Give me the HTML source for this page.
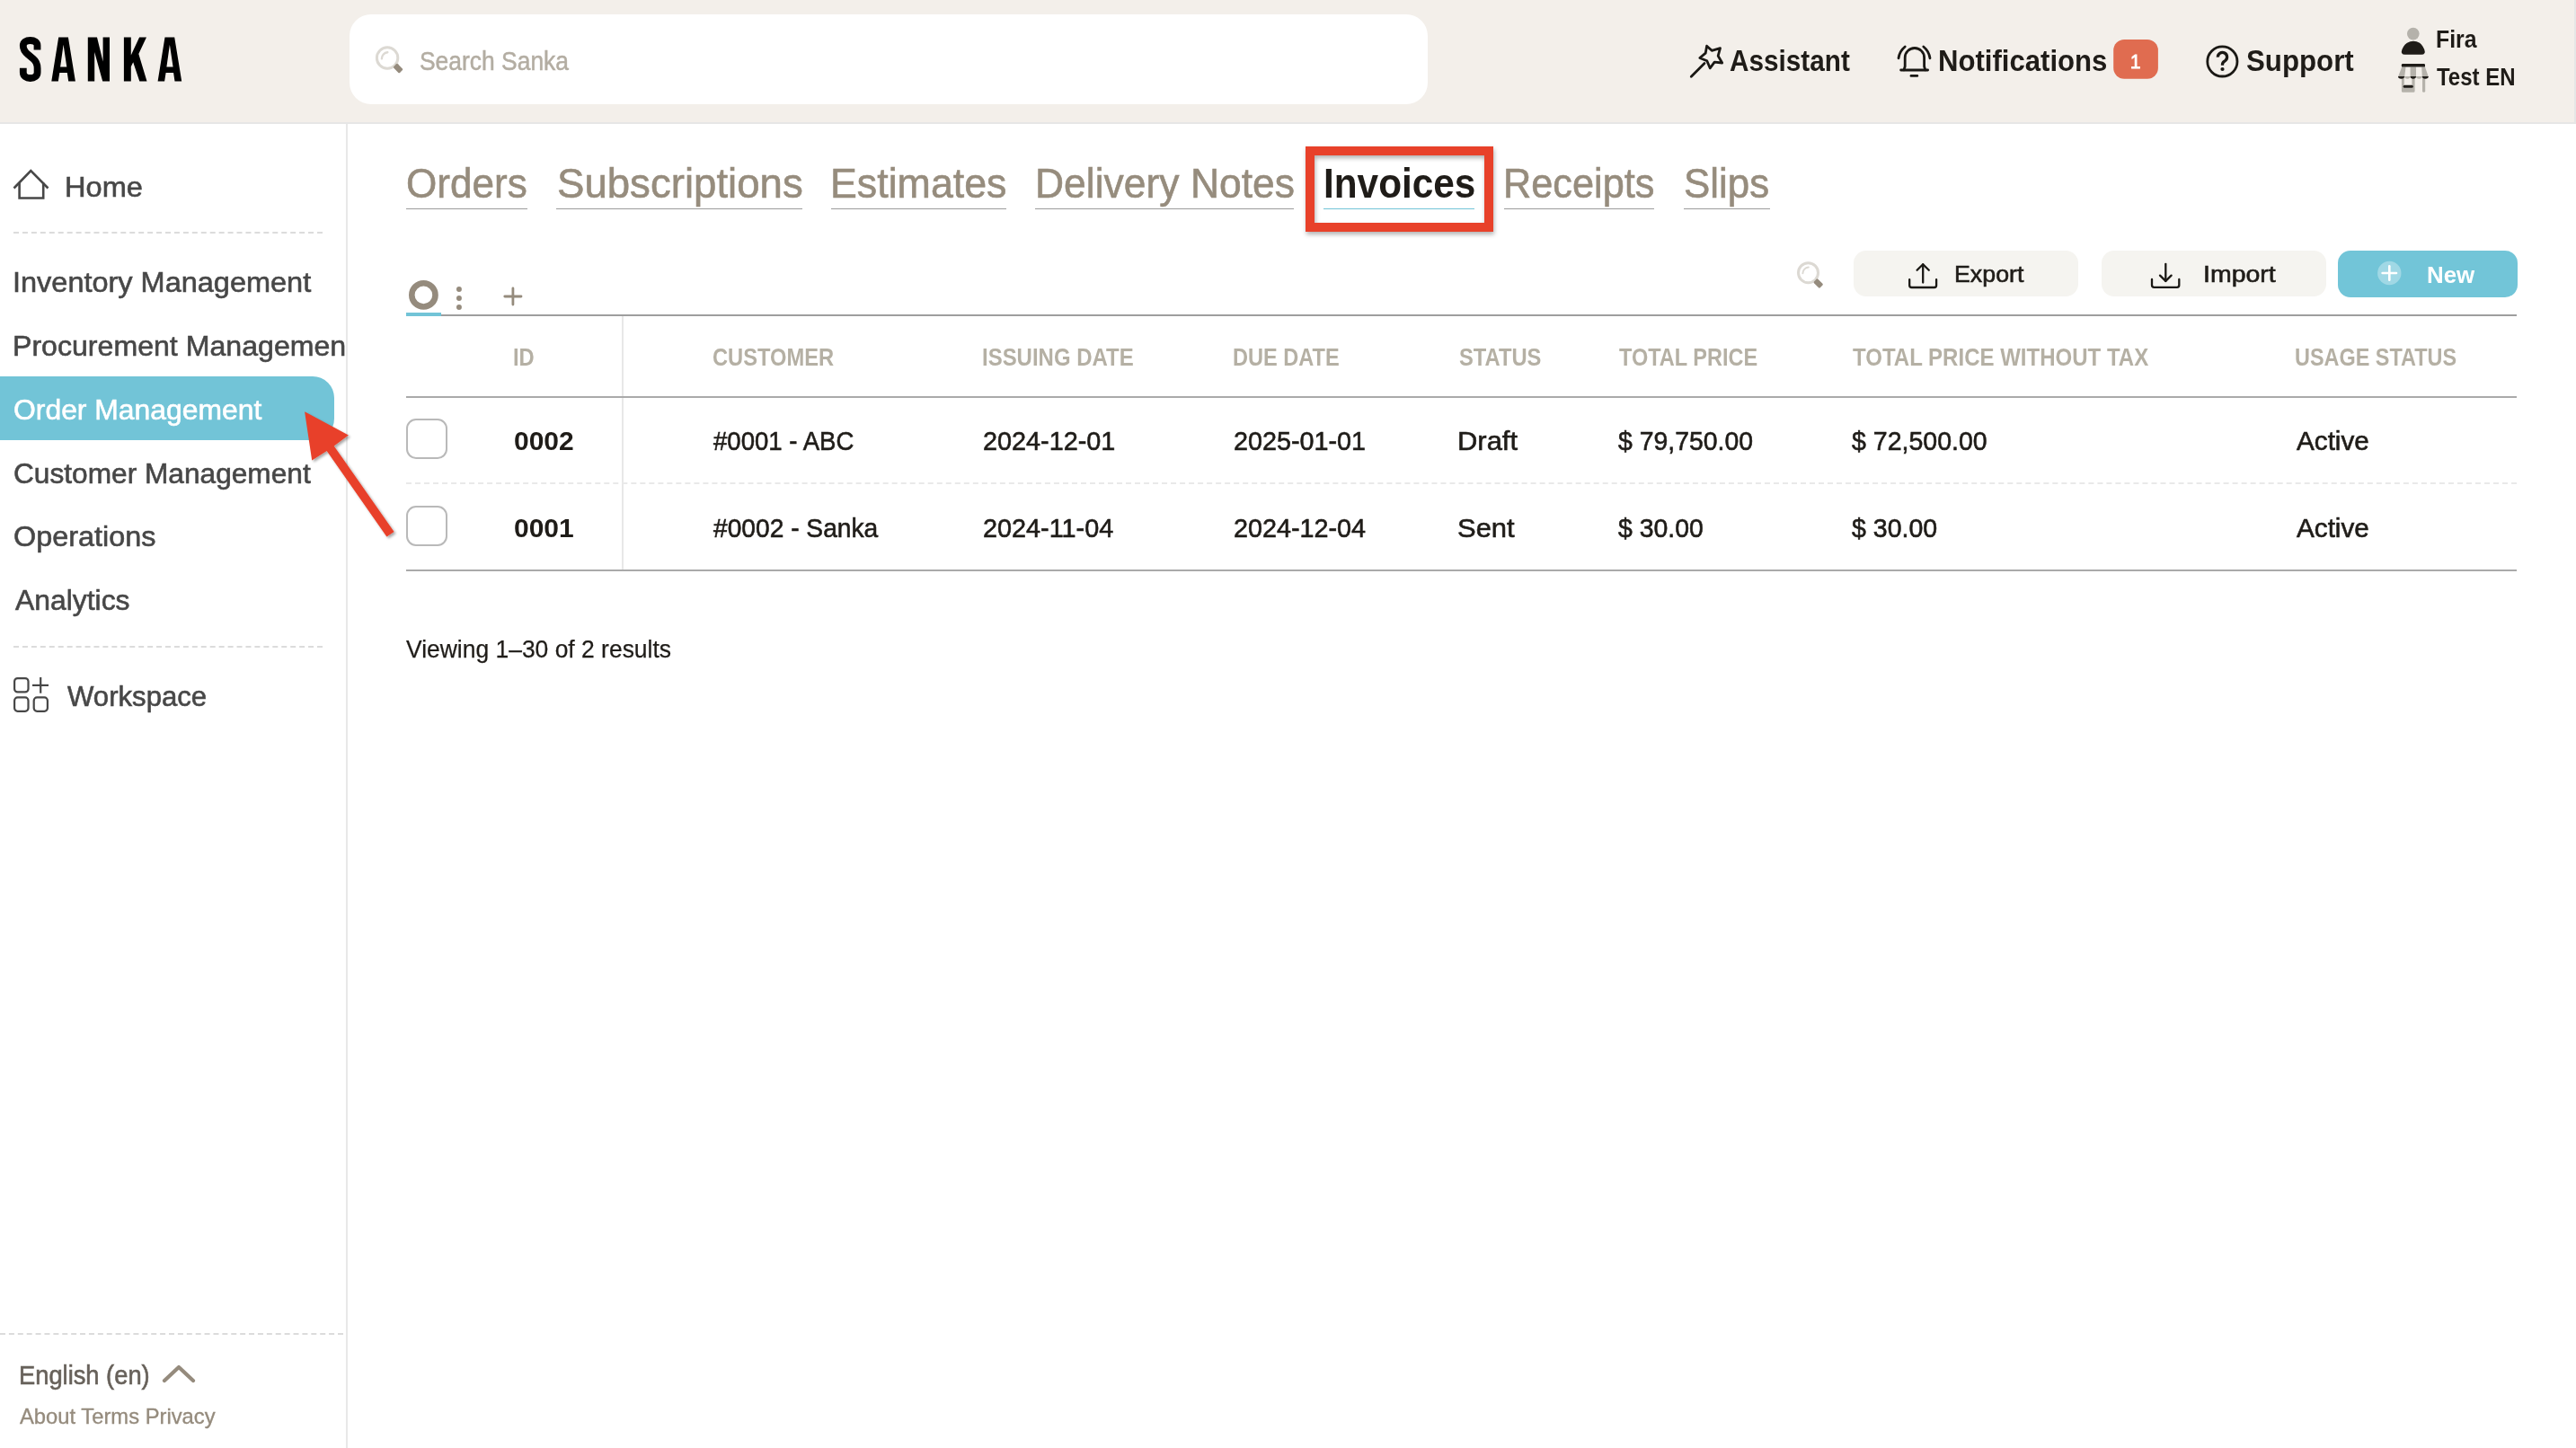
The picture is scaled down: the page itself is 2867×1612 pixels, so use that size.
<!DOCTYPE html>
<html><head><meta charset="utf-8"><style>
html,body{margin:0;padding:0;background:#fff;width:2867px;height:1612px;overflow:hidden;position:relative}
.t{position:absolute;font-family:"Liberation Sans", sans-serif;line-height:1;white-space:nowrap;transform-origin:0 0}
</style></head><body>
<div style="position:absolute;left:0px;top:0px;width:2867px;height:136px;background:#f3efea"></div>
<div style="position:absolute;left:0px;top:136px;width:2867px;height:2px;background:#e6e6e6"></div>
<div style="position:absolute;left:2865px;top:0px;width:2px;height:138px;background:#e6e6e6"></div>
<svg style="position:absolute;left:0;top:0" width="240" height="136" viewBox="0 0 240 136">
<path fill="none" stroke="#000" stroke-width="7.8" stroke-linejoin="miter" d="M41.5 55.5 V50.5 C41.5 47 38.5 45 33.7 45 C29 45 25.8 47 25.8 51 C25.8 55 27.5 57.5 31 60.5 L37 65.5 C40 68 41.6 71 41.6 76 V80.5 C41.6 84.5 38.5 87 33.7 87 C29 87 25.8 84.5 25.8 80.5 V75.8"/>
<path fill="#000" fill-rule="evenodd" d="M57.3 90.5 L65.2 41.6 L75.9 41.6 L83.9 90.5 L76.2 90.5 L74.8 81 L66.3 81 L64.8 90.5 Z M67.1 74.5 L70.6 49.8 L74.3 74.5 Z"/>
<polygon fill="#000" points="97.8,90.5 97.8,41.6 108,41.6 114.6,68.5 114.6,41.6 122,41.6 122,90.5 114.2,90.5 105.2,58 105.2,90.5"/>
<polygon fill="#000" points="137.9,41.6 145.8,41.6 145.8,61.5 155.1,41.6 163,41.6 154.3,60 163.5,90.5 155.3,90.5 148.2,69.2 145.8,74.2 145.8,90.5 137.9,90.5"/>
<path fill="#000" fill-rule="evenodd" d="M175.6 90.5 L183.5 41.6 L194.2 41.6 L202.2 90.5 L194.5 90.5 L193.1 81 L184.6 81 L183.1 90.5 Z M185.4 74.5 L188.9 49.8 L192.6 74.5 Z"/>
</svg>
<div style="position:absolute;left:389px;top:16px;width:1200px;height:100px;background:#fff;border-radius:24px"></div>
<svg style="position:absolute;left:400px;top:40px" width="60" height="50" viewBox="400 40 60 50">
<circle cx="431.1" cy="64.5" r="11.7" fill="none" stroke="#dcd9d3" stroke-width="3"/>
<path d="M424.9 65.3 A7.2 7.2 0 0 1 431.3 58.2" fill="none" stroke="#dcd9d3" stroke-width="2.4" stroke-linecap="round"/>
<rect x="438.3" y="72.9" width="9.6" height="6.4" rx="1.2" fill="#958b7d" transform="rotate(45 443.1 76.1)"/>
</svg>
<div class="t" style="left:466.9px;top:52.7px;font-size:29.36px;font-weight:400;transform:scaleX(0.9);color:#b3ada2;-webkit-text-stroke:0.5px currentColor;">Search Sanka</div>
<svg style="position:absolute;left:1870px;top:20px" width="960" height="100" viewBox="1870 20 960 100">
<g fill="none" stroke="#1a1814" stroke-width="2.8" stroke-linecap="round" stroke-linejoin="round">
<line x1="1882.3" y1="85.2" x2="1897" y2="70.6"/>
<polygon points="1899.6,51.2 1905.2,56.3 1914.5,53.6 1912.2,62.2 1916.7,70 1908.2,69.2 1903.2,75.8 1899.8,67.8 1891.8,64.5 1898.2,59.2"/>
<path d="M2119 77.8 L2120.2 74 V64.2 A10.7 10.7 0 0 1 2141.6 64.2 V74 L2142.8 77.8"/>
<line x1="2115.6" y1="78" x2="2145.6" y2="78"/>
<line x1="2127" y1="84.4" x2="2133.8" y2="84.4"/>
<path d="M2113 64.8 A20 20 0 0 1 2120.2 52"/>
<path d="M2148 64.8 A20 20 0 0 0 2140.8 52"/>
<circle cx="2473.4" cy="68.4" r="16.6"/>
<path d="M2468.4 63.6 A5.1 5.1 0 1 1 2476.2 67.8 C2474.5 68.8 2473.5 69.8 2473.5 71.6 V72.8" stroke-width="3.3" stroke-linecap="butt"/>
</g>
<circle cx="2473.5" cy="77" r="2.1" fill="#1a1814"/>
<rect x="2352.2" y="44" width="49.7" height="43.8" rx="12" fill="#e06c50"/>
<circle cx="2685.8" cy="37.6" r="6.8" fill="#b5b2ab"/>
<path d="M2679 47.8 Q2686 43.6 2693 47.8 Q2695 49.2 2696.5 51.8 L2698.2 55 Q2700.2 60.8 2695 60.8 H2676.6 Q2671.4 60.8 2673.4 55 L2675.1 51.8 Q2676.6 49.2 2679 47.8 Z" fill="#1f1c18"/>
<g fill="#b5b2ab">
<polygon points="2673.2,74.5 2677.6,74.5 2676.1,85.5 2669,85.5"/>
<rect x="2682.6" y="74.5" width="6.4" height="11"/>
<polygon points="2695.2,74.5 2699,74.5 2702.8,85.5 2695.8,85.5"/>
<path d="M2676.1 85 h6.5 a3.25 2.8 0 0 1 -6.5 0 Z M2689 85 h6.8 a3.4 2.8 0 0 1 -6.8 0 Z"/>
<path d="M2672.9 87 H2675.8 V97 H2684.4 V87 H2687.6 V101.3 Q2687.6 102.8 2686.1 102.8 H2674.4 Q2672.9 102.8 2672.9 101.3 Z"/>
<rect x="2696" y="86" width="3.2" height="16.8" rx="1.6"/>
</g>
<g fill="#1f1c18">
<rect x="2672.9" y="71.1" width="26.1" height="3.5" rx="1.2"/>
<path d="M2669 85 h7.1 a3.55 2.8 0 0 1 -7.1 0 Z M2682.6 85 h6.4 a3.2 2.8 0 0 1 -6.4 0 Z M2695.8 85 h7 a3.5 2.8 0 0 1 -7 0 Z"/>
<rect x="2674.7" y="94.8" width="11.1" height="3" rx="1.5"/>
</g>
</svg>
<div class="t" style="left:1924.9px;top:51.9px;font-size:32.46px;font-weight:700;transform:scaleX(0.9159);color:#1f1c18;">Assistant</div>
<div class="t" style="left:2157.1px;top:52.1px;font-size:32.46px;font-weight:700;transform:scaleX(0.9585);color:#1f1c18;">Notifications</div>
<div class="t" style="left:2500.0px;top:52.0px;font-size:32.46px;font-weight:700;transform:scaleX(0.9626);color:#1f1c18;">Support</div>
<div class="t" style="left:2710.8px;top:30.9px;font-size:26.89px;font-weight:700;transform:scaleX(0.9234);color:#1f1c18;">Fira</div>
<div class="t" style="left:2712.3px;top:72.8px;font-size:26.89px;font-weight:700;transform:scaleX(0.8927);color:#1f1c18;">Test EN</div>
<div class="t" style="left:2371.1px;top:57.0px;font-size:22.67px;font-weight:700;transform:scaleX(0.9091);color:#ffffff;font-weight:400;-webkit-text-stroke:0.9px #fff;">1</div>
<div style="position:absolute;left:385px;top:138px;width:2px;height:1474px;background:#e8e8e8"></div>
<svg style="position:absolute;left:0;top:170px" width="380" height="640" viewBox="0 170 380 640">
<g fill="none" stroke="#474747" stroke-width="2.6">
<path d="M15.5 209.5 L34.3 190 L53.5 209.5" stroke-linecap="butt"/>
<path d="M21.6 203.5 V220.5 H48.2 V203.5"/>
</g>
<g fill="none" stroke="#474747" stroke-width="2.2">
<rect x="16.1" y="755.1" width="15.4" height="15.3" rx="3.5"/>
<rect x="16.1" y="776.4" width="15.4" height="15.4" rx="3.5"/>
<rect x="37.7" y="776.4" width="15.2" height="15.4" rx="3.5"/>
<line x1="45.2" y1="754" x2="45.2" y2="771.7"/>
<line x1="36" y1="762.9" x2="54" y2="762.9"/>
</g>
</svg>
<div style="position:absolute;left:15px;top:258px;width:344px;height:2px;border-top:2px dashed #dcdcdc;box-sizing:border-box"></div>
<div style="position:absolute;left:15px;top:719px;width:344px;height:2px;border-top:2px dashed #dcdcdc;box-sizing:border-box"></div>
<div style="position:absolute;left:0px;top:1484px;width:382px;height:2px;border-top:2px dashed #dcdcdc;box-sizing:border-box"></div>
<div style="position:absolute;left:0px;top:419px;width:372px;height:71px;background:#72c4d7;border-radius:0 24px 24px 0"></div>
<div style="position:absolute;left:0;top:0;width:385px;height:1612px;overflow:hidden">
<div class="t" style="left:72.4px;top:192.4px;font-size:31.99px;font-weight:400;transform:scaleX(1.0185);color:#474747;-webkit-text-stroke:0.6px currentColor;">Home</div>
<div class="t" style="left:14.0px;top:297.8px;font-size:31.99px;font-weight:400;transform:scaleX(1.0154);color:#474747;-webkit-text-stroke:0.6px currentColor;">Inventory Management</div>
<div class="t" style="left:14.0px;top:369.0px;font-size:31.99px;font-weight:400;transform:scaleX(1.0038);color:#474747;-webkit-text-stroke:0.6px currentColor;">Procurement Management</div>
<div class="t" style="left:14.6px;top:439.7px;font-size:31.99px;font-weight:400;transform:scaleX(0.9964);color:#ffffff;-webkit-text-stroke:0.6px currentColor;">Order Management</div>
<div class="t" style="left:15.0px;top:510.7px;font-size:31.99px;font-weight:400;transform:scaleX(0.9895);color:#474747;-webkit-text-stroke:0.6px currentColor;">Customer Management</div>
<div class="t" style="left:15.0px;top:581.0px;font-size:31.99px;font-weight:400;transform:scaleX(1.0131);color:#474747;-webkit-text-stroke:0.6px currentColor;">Operations</div>
<div class="t" style="left:17.0px;top:651.6px;font-size:31.99px;font-weight:400;transform:scaleX(0.9961);color:#474747;-webkit-text-stroke:0.6px currentColor;">Analytics</div>
<div class="t" style="left:74.5px;top:758.9px;font-size:31.99px;font-weight:400;transform:scaleX(0.9734);color:#474747;-webkit-text-stroke:0.6px currentColor;">Workspace</div>
</div>
<div class="t" style="left:21.0px;top:1517.3px;font-size:28.63px;font-weight:400;transform:scaleX(0.9537);color:#66615a;-webkit-text-stroke:0.6px currentColor;color:#67615a;">English (en)</div>
<div class="t" style="left:21.8px;top:1565.0px;font-size:24.71px;font-weight:400;transform:scaleX(0.9624);color:#958b7d;-webkit-text-stroke:0.35px currentColor;">About Terms Privacy</div>
<svg style="position:absolute;left:170px;top:1510px" width="60" height="40" viewBox="170 1510 60 40">
<path d="M183 1537 L199 1522 L215 1537" fill="none" stroke="#958b7d" stroke-width="4.2" stroke-linecap="round" stroke-linejoin="round"/>
</svg>
<div style="position:absolute;left:452px;top:232px;width:135px;height:1.3000000000000114px;background:#9c9c9c"></div>
<div style="position:absolute;left:619px;top:232px;width:274px;height:1.3000000000000114px;background:#9c9c9c"></div>
<div style="position:absolute;left:925px;top:232px;width:195px;height:1.3000000000000114px;background:#9c9c9c"></div>
<div style="position:absolute;left:1152px;top:232px;width:288px;height:1.3000000000000114px;background:#9c9c9c"></div>
<div style="position:absolute;left:1674px;top:232px;width:167px;height:1.3000000000000114px;background:#9c9c9c"></div>
<div style="position:absolute;left:1874px;top:232px;width:96px;height:1.3000000000000114px;background:#9c9c9c"></div>
<div style="position:absolute;left:1473px;top:232px;width:168px;height:1.3000000000000114px;background:#72c4d7"></div>
<div class="t" style="left:451.6px;top:181.2px;font-size:46.24px;font-weight:400;transform:scaleX(0.9543);color:#968c7d;-webkit-text-stroke:0.6px currentColor;">Orders</div>
<div class="t" style="left:619.5px;top:181.2px;font-size:46.24px;font-weight:400;transform:scaleX(0.9861);color:#968c7d;-webkit-text-stroke:0.6px currentColor;">Subscriptions</div>
<div class="t" style="left:923.9px;top:181.2px;font-size:46.24px;font-weight:400;transform:scaleX(0.968);color:#968c7d;-webkit-text-stroke:0.6px currentColor;">Estimates</div>
<div class="t" style="left:1151.6px;top:181.2px;font-size:46.24px;font-weight:400;transform:scaleX(0.9614);color:#968c7d;-webkit-text-stroke:0.6px currentColor;">Delivery Notes</div>
<div class="t" style="left:1472.5px;top:181.0px;font-size:46.24px;font-weight:700;transform:scaleX(0.9156);color:#1f1c18;">Invoices</div>
<div class="t" style="left:1673.3px;top:181.2px;font-size:46.24px;font-weight:400;transform:scaleX(0.9368);color:#968c7d;-webkit-text-stroke:0.6px currentColor;">Receipts</div>
<div class="t" style="left:1874.0px;top:181.2px;font-size:46.24px;font-weight:400;transform:scaleX(0.9495);color:#968c7d;-webkit-text-stroke:0.6px currentColor;">Slips</div>
<div style="position:absolute;left:1453px;top:163px;width:209px;height:95px;border:10px solid #e8412a;box-sizing:border-box;filter:drop-shadow(1px 3px 2.5px rgba(0,0,0,0.3))"></div>
<svg style="position:absolute;left:440px;top:300px" width="160" height="60" viewBox="440 300 160 60">
<circle cx="471.4" cy="328.4" r="13.1" fill="none" stroke="#958b7d" stroke-width="6.6"/>
<circle cx="510.9" cy="321.9" r="3" fill="#958b7d"/>
<circle cx="510.9" cy="331.9" r="3" fill="#958b7d"/>
<circle cx="510.9" cy="341.9" r="3" fill="#958b7d"/>
<g stroke="#958b7d" stroke-width="2.8" stroke-linecap="round"><line x1="561.8" y1="330" x2="580" y2="330"/><line x1="570.9" y1="320.9" x2="570.9" y2="339.1"/></g>
</svg>
<div style="position:absolute;left:452px;top:348px;width:39px;height:4px;background:#72c4d7"></div>
<div style="position:absolute;left:491px;top:350px;width:2310px;height:2px;background:#9e9e9e"></div>
<svg style="position:absolute;left:1990px;top:280px" width="50" height="50" viewBox="1990 280 50 50">
<circle cx="2012.5" cy="303.7" r="11" fill="none" stroke="#dcd9d3" stroke-width="3"/>
<path d="M2006.4 304.2 A6.8 6.8 0 0 1 2012.8 297.6" fill="none" stroke="#dcd9d3" stroke-width="2" stroke-linecap="round"/>
<rect x="2018.9" y="312.4" width="9.6" height="6.2" rx="1.2" fill="#958b7d" transform="rotate(45 2023.7 315.5)"/>
</svg>
<div style="position:absolute;left:2063px;top:279px;width:250px;height:51px;background:#f5f4f0;border-radius:14px"></div>
<div style="position:absolute;left:2339px;top:279px;width:250px;height:51px;background:#f5f4f0;border-radius:14px"></div>
<div style="position:absolute;left:2602px;top:279px;width:200px;height:52px;background:#72c5d8;border-radius:14px"></div>
<svg style="position:absolute;left:2110px;top:285px" width="700" height="45" viewBox="2110 285 700 45">
<g fill="none" stroke="#1a1814" stroke-width="2.3" stroke-linecap="round" stroke-linejoin="round">
<line x1="2140.2" y1="294.5" x2="2140.2" y2="314.5"/>
<path d="M2133.6 300.8 L2140.2 294.2 L2146.8 300.8"/>
<path d="M2125.2 311.2 V317.8 Q2125.2 320 2127.6 320 H2152.8 Q2155.1 320 2155.1 317.8 V311.2"/>
<line x1="2410.3" y1="293.8" x2="2410.3" y2="313"/>
<path d="M2404 306.6 L2410.3 312.9 L2416.6 306.6"/>
<path d="M2395 311 V317.6 Q2395 319.8 2397.4 319.8 H2423 Q2425.3 319.8 2425.3 317.6 V311"/>
</g>
<circle cx="2659.3" cy="304" r="13.2" fill="#ffffff" fill-opacity="0.33"/>
<g stroke="#fff" stroke-width="2.6" stroke-linecap="round"><line x1="2651.6" y1="304" x2="2667" y2="304"/><line x1="2659.3" y1="296.3" x2="2659.3" y2="311.7"/></g>
</svg>
<div class="t" style="left:2174.7px;top:292.2px;font-size:26.7px;font-weight:400;transform:scaleX(1.004);color:#1f1c18;-webkit-text-stroke:0.6px currentColor;">Export</div>
<div class="t" style="left:2451.9px;top:292.3px;font-size:26.7px;font-weight:400;transform:scaleX(1.0676);color:#1f1c18;-webkit-text-stroke:0.6px currentColor;">Import</div>
<div class="t" style="left:2700.5px;top:293.0px;font-size:26.7px;font-weight:700;transform:scaleX(0.9698);color:#ffffff;">New</div>
<div style="position:absolute;left:692px;top:352px;width:2px;height:283px;background:#e8e8e8"></div>
<div style="position:absolute;left:452px;top:441px;width:2349px;height:2px;background:#aaaaaa"></div>
<div style="position:absolute;left:452px;top:537px;width:2349px;height:2px;border-top:2px dashed #e9e9e9;box-sizing:border-box"></div>
<div style="position:absolute;left:452px;top:634px;width:2349px;height:2px;background:#aaaaaa"></div>
<div style="position:absolute;left:452px;top:466px;width:46px;height:45px;border:2px solid #b9b9b9;border-radius:11px;box-sizing:border-box;background:#fff"></div>
<div style="position:absolute;left:452px;top:563px;width:46px;height:45px;border:2px solid #b9b9b9;border-radius:11px;box-sizing:border-box;background:#fff"></div>
<div class="t" style="left:571.2px;top:384.3px;font-size:27.33px;font-weight:700;transform:scaleX(0.8674);color:#b5b0a4;">ID</div>
<div class="t" style="left:793.1px;top:384.3px;font-size:27.33px;font-weight:700;transform:scaleX(0.8669);color:#b5b0a4;">CUSTOMER</div>
<div class="t" style="left:1093.2px;top:384.3px;font-size:27.33px;font-weight:700;transform:scaleX(0.8767);color:#b5b0a4;">ISSUING DATE</div>
<div class="t" style="left:1371.9px;top:384.3px;font-size:27.33px;font-weight:700;transform:scaleX(0.8622);color:#b5b0a4;">DUE DATE</div>
<div class="t" style="left:1623.6px;top:384.3px;font-size:27.33px;font-weight:700;transform:scaleX(0.8689);color:#b5b0a4;">STATUS</div>
<div class="t" style="left:1801.6px;top:384.3px;font-size:27.33px;font-weight:700;transform:scaleX(0.8601);color:#b5b0a4;">TOTAL PRICE</div>
<div class="t" style="left:2061.8px;top:384.3px;font-size:27.33px;font-weight:700;transform:scaleX(0.8791);color:#b5b0a4;">TOTAL PRICE WITHOUT TAX</div>
<div class="t" style="left:2554.2px;top:384.3px;font-size:27.33px;font-weight:700;transform:scaleX(0.8575);color:#b5b0a4;">USAGE STATUS</div>
<div class="t" style="left:571.7px;top:476.1px;font-size:29.87px;font-weight:700;transform:scaleX(1.0047);color:#1f1c18;">0002</div>
<div class="t" style="left:794.0px;top:476.1px;font-size:29.87px;font-weight:400;transform:scaleX(0.9238);color:#1f1c18;-webkit-text-stroke:0.6px currentColor;">#0001 - ABC</div>
<div class="t" style="left:1094.0px;top:476.1px;font-size:29.87px;font-weight:400;transform:scaleX(0.9649);color:#1f1c18;-webkit-text-stroke:0.6px currentColor;">2024-12-01</div>
<div class="t" style="left:1372.6px;top:476.1px;font-size:29.87px;font-weight:400;transform:scaleX(0.9629);color:#1f1c18;-webkit-text-stroke:0.6px currentColor;">2025-01-01</div>
<div class="t" style="left:1622.4px;top:476.1px;font-size:29.87px;font-weight:400;transform:scaleX(1.0365);color:#1f1c18;-webkit-text-stroke:0.6px currentColor;">Draft</div>
<div class="t" style="left:1800.6px;top:476.1px;font-size:29.87px;font-weight:400;transform:scaleX(0.9513);color:#1f1c18;-webkit-text-stroke:0.6px currentColor;">$ 79,750.00</div>
<div class="t" style="left:2061.0px;top:476.1px;font-size:29.87px;font-weight:400;transform:scaleX(0.9551);color:#1f1c18;-webkit-text-stroke:0.6px currentColor;">$ 72,500.00</div>
<div class="t" style="left:2556.0px;top:476.1px;font-size:29.87px;font-weight:400;transform:scaleX(0.9938);color:#1f1c18;-webkit-text-stroke:0.6px currentColor;">Active</div>
<div class="t" style="left:571.7px;top:573.0px;font-size:29.87px;font-weight:700;transform:scaleX(1.0047);color:#1f1c18;">0001</div>
<div class="t" style="left:794.0px;top:573.0px;font-size:29.87px;font-weight:400;transform:scaleX(0.9433);color:#1f1c18;-webkit-text-stroke:0.6px currentColor;">#0002 - Sanka</div>
<div class="t" style="left:1094.0px;top:573.0px;font-size:29.87px;font-weight:400;transform:scaleX(0.9649);color:#1f1c18;-webkit-text-stroke:0.6px currentColor;">2024-11-04</div>
<div class="t" style="left:1372.6px;top:573.0px;font-size:29.87px;font-weight:400;transform:scaleX(0.9629);color:#1f1c18;-webkit-text-stroke:0.6px currentColor;">2024-12-04</div>
<div class="t" style="left:1622.4px;top:573.0px;font-size:29.87px;font-weight:400;transform:scaleX(1.0365);color:#1f1c18;-webkit-text-stroke:0.6px currentColor;">Sent</div>
<div class="t" style="left:1800.6px;top:573.0px;font-size:29.87px;font-weight:400;transform:scaleX(0.9513);color:#1f1c18;-webkit-text-stroke:0.6px currentColor;">$ 30.00</div>
<div class="t" style="left:2061.0px;top:573.0px;font-size:29.87px;font-weight:400;transform:scaleX(0.9551);color:#1f1c18;-webkit-text-stroke:0.6px currentColor;">$ 30.00</div>
<div class="t" style="left:2556.0px;top:573.0px;font-size:29.87px;font-weight:400;transform:scaleX(0.9938);color:#1f1c18;-webkit-text-stroke:0.6px currentColor;">Active</div>
<div class="t" style="left:452.0px;top:709.0px;font-size:28.05px;font-weight:400;transform:scaleX(0.9429);color:#1f1c18;-webkit-text-stroke:0.25px currentColor;">Viewing 1–30 of 2 results</div>
<svg style="position:absolute;left:320px;top:440px" width="140" height="180" viewBox="320 440 140 180">
<defs><filter id="sh" x="-20%" y="-20%" width="140%" height="140%"><feGaussianBlur in="SourceAlpha" stdDeviation="1.5"/><feOffset dx="1.5" dy="2" result="o"/><feComponentTransfer><feFuncA type="linear" slope="0.35"/></feComponentTransfer><feMerge><feMergeNode/><feMergeNode in="SourceGraphic"/></feMerge></filter></defs>
<polygon filter="url(#sh)" fill="#e8412a" points="339.1,458.2 387.9,484.4 371.7,496.4 438.6,592.1 430.4,597.4 363.7,501.9 347.2,512.6"/>
</svg>
</body></html>
